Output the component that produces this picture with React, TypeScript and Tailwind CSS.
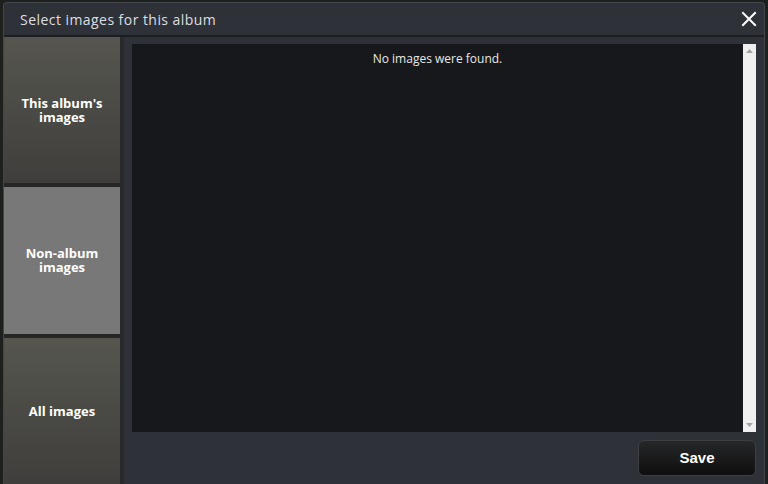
import React from "react";

const tabs = [
  { label: ["This album's", "images"], active: false },
  { label: ["Non-album", "images"], active: true },
  { label: ["All images"], active: false },
];

export default function App() {
  return (
    <div className="w-[768px] h-[484px] overflow-hidden bg-[#1d201d] pt-[2px] px-[3px]">
      <div className="flex flex-col h-[482px] rounded-t-[4px] border border-b-0 border-[#43464d] bg-[#2e3138] overflow-hidden">
        <div className="flex items-center justify-between h-[34px] shrink-0 pl-[16px] pr-[5px] border-b-2 border-[#1c1d21]">
          <span className="text-[14px] tracking-[0.45px] text-[#dedfe1] font-['Open_Sans',sans-serif]">
            Select images for this album
          </span>
          <button className="w-[20px] h-[20px] flex items-center justify-center">
            <svg width="16" height="16" viewBox="0 0 16 16">
              <path d="M2 2 L14 14 M14 2 L2 14" stroke="#ffffff" strokeWidth="2" strokeLinecap="square" />
            </svg>
          </button>
        </div>
        <div className="flex flex-1 min-h-0">
          <div className="flex flex-col w-[116px] shrink-0 bg-[#262626] gap-[4px]">
            {tabs.map((t, i) => (
              <div
                key={i}
                className={
                  "flex-1 flex flex-col items-center justify-center text-white font-bold text-[13px] leading-[14px] font-['Open_Sans',sans-serif] " +
                  (t.active
                    ? "bg-[#787878]"
                    : "bg-gradient-to-b from-[#56564f] to-[#3f3e3c]")
                }
              >
                {t.label.map((l) => (
                  <span key={l}>{l}</span>
                ))}
              </div>
            ))}
          </div>
          <div className="w-[4px] shrink-0 bg-[#28292a]" />
          <div className="flex-1 flex flex-col pt-[7px] pl-[8px] pr-[8px] pb-[6px] gap-[8px]">
            <div className="flex h-[388px]">
              <div className="flex-1 bg-[#17181b] flex justify-center pt-[6px]">
                <span className="text-[12px] text-[#e8e8e8] font-['Open_Sans',sans-serif] h-fit">
                  No images were found.
                </span>
              </div>
              <div className="w-[13px] bg-[#efefef] flex flex-col justify-between items-center py-[5px]">
                <svg width="7" height="4" viewBox="0 0 7 4">
                  <path d="M0 4 L3.5 0 L7 4 Z" fill="#a3a3a3" />
                </svg>
                <svg width="7" height="4" viewBox="0 0 7 4">
                  <path d="M0 0 L3.5 4 L7 0 Z" fill="#a3a3a3" />
                </svg>
              </div>
            </div>
            <div className="flex justify-end">
              <button className="w-[118px] h-[36px] rounded-[6px] border border-[#3d3f42] bg-gradient-to-b from-[#262728] to-[#0f0f10] text-white font-bold text-[15px] font-['Liberation_Sans',sans-serif]">
                Save
              </button>
            </div>
          </div>
        </div>
      </div>
    </div>
  );
}
